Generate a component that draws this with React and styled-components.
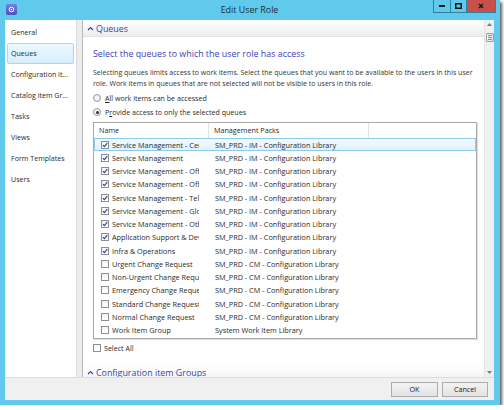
import React from "react";
import styled, { createGlobalStyle } from "styled-components";

const GlobalStyle = createGlobalStyle`
  html, body {
    margin: 0;
    padding: 0;
    background: #ffffff;
  }
  body {
    font-family: "Open Sans", "Noto Sans", sans-serif;
  }
`;

const Window = styled.div`
  width: 500px;
  height: 405px;
  box-sizing: border-box;
  background: #5fcaec;
  padding: 0 6px 5px 5px;
  display: flex;
  flex-direction: column;
  box-shadow: 2px 2px 3px rgba(0, 0, 0, 0.65);
`;

const TitleBar = styled.div`
  height: 20px;
  flex-shrink: 0;
  display: grid;
  grid-template-columns: 1fr auto 1fr;
  align-items: start;
`;

const AppIcon = styled.div`
  margin-top: 4px;
  margin-left: 1px;
  width: 11px;
  height: 11px;
  border-radius: 2px;
  background: linear-gradient(#7a7fe0, #4c4fb8);
  display: flex;
  align-items: center;
  justify-content: center;
`;

const Title = styled.div`
  font-size: 8.9px;
  line-height: 20px;
  color: #1c2a33;
`;

const Caption = styled.div`
  justify-self: end;
  margin-right: -2px;
  display: flex;
  height: 13px;
`;

const CaptionButton = styled.div`
  width: ${(p) => p.$w}px;
  height: 13px;
  box-sizing: border-box;
  border: 1px solid #2f7f9f;
  border-left-width: ${(p) => (p.$first ? 1 : 0)}px;
  border-top: none;
  background: ${(p) => (p.$close ? "#c8504a" : "#5fcaec")};
  display: flex;
  align-items: center;
  justify-content: center;
`;

const Frame = styled.div`
  flex: 1;
  min-height: 0;
  display: flex;
  flex-direction: column;
  background: #fff;
`;

const Upper = styled.div`
  flex: 1;
  min-height: 0;
  display: flex;
`;

const Nav = styled.div`
  width: 71px;
  flex-shrink: 0;
  padding-top: 2px;
  box-sizing: border-box;
  background: #fff;
`;

const NavItem = styled.div`
  height: 21px;
  margin: 0 2px;
  padding-left: 3px;
  box-sizing: border-box;
  font-size: 7.1px;
  line-height: 19px;
  color: #2a2a2a;
  white-space: nowrap;
  border: 1px solid ${(p) => (p.$active ? "#a8d8f2" : "transparent")};
  border-radius: 2px;
  background: ${(p) =>
    p.$active ? "linear-gradient(#eef8fe, #d6eefb)" : "transparent"};
`;

const Splitter = styled.div`
  width: 5px;
  flex-shrink: 0;
  background: #ececec;
  border-left: 1px solid #dadada;
  border-right: 1px solid #b9b9b9;
`;

const ContentArea = styled.div`
  flex: 1;
  min-width: 0;
  display: flex;
`;

const Scroller = styled.div`
  flex: 1;
  min-width: 0;
  overflow: hidden;
`;

const SectionHeader = styled.div`
  height: 17px;
  box-sizing: border-box;
  padding-left: 4px;
  display: flex;
  align-items: center;
  gap: 2px;
  background: linear-gradient(#ffffff, #ededed);
  border-bottom: 1px solid #e2e2e2;
  font-size: 8.9px;
  color: #3b3fb0;
`;

const Section = styled.div`
  padding: 10px 7px 0 10px;
`;

const Heading = styled.div`
  font-size: 8.9px;
  line-height: 14px;
  color: #3d3fb5;
`;

const Description = styled.div`
  margin-top: 6px;
  font-size: 7px;
  line-height: 11px;
  color: #333;
`;

const RadioRow = styled.label`
  display: flex;
  align-items: center;
  gap: 4px;
  height: 14px;
  font-size: 7.1px;
  color: #2a2a2a;
  margin-top: ${(p) => p.$mt || 0}px;
`;

const RadioCircle = styled.span`
  width: 8px;
  height: 8px;
  box-sizing: border-box;
  border-radius: 50%;
  border: 1px solid #9a9a9a;
  background: radial-gradient(#ffffff, #e6e6e6);
  display: flex;
  align-items: center;
  justify-content: center;
  &::after {
    content: "";
    width: 3px;
    height: 3px;
    border-radius: 50%;
    background: ${(p) => (p.$on ? "#333" : "transparent")};
  }
`;

const Table = styled.div`
  margin-top: 3px;
  border: 1px solid #a9a9a9;
  box-shadow: 1px 1px 1px rgba(0, 0, 0, 0.12);
  padding-bottom: 1px;
`;

const HeaderRow = styled.div`
  display: grid;
  grid-template-columns: 115px 160px 1fr;
  height: 15px;
`;

const HeaderCell = styled.div`
  font-size: 7.2px;
  line-height: 15px;
  padding-left: 5px;
  color: #2a2a2a;
  border-right: ${(p) => (p.$last ? "none" : "1px solid #e3e3e3")};
`;

const Row = styled.div`
  display: grid;
  grid-template-columns: 115px 160px 1fr;
  height: 13.25px;
  box-sizing: border-box;
  align-items: center;
  border: 1px solid ${(p) => (p.$selected ? "#8ccbee" : "transparent")};
  background: ${(p) =>
    p.$selected ? "linear-gradient(#f4fafe, #e1f1fc)" : "transparent"};
`;

const NameCell = styled.div`
  min-width: 0;
  display: flex;
  align-items: center;
  gap: 3px;
  padding-left: 6px;
  margin-right: 11px;
  overflow: hidden;
  white-space: nowrap;
  font-size: 7.3px;
  color: #2a2a2a;
`;

const PackCell = styled.div`
  min-width: 0;
  padding-left: 5px;
  white-space: nowrap;
  overflow: hidden;
  font-size: 7.3px;
  color: #2a2a2a;
`;

const Box = styled.span`
  width: 8px;
  height: 8px;
  flex-shrink: 0;
  box-sizing: border-box;
  border: 1px solid #8e8f8f;
  background: linear-gradient(#f4f4f4, #ffffff);
  display: flex;
  align-items: center;
  justify-content: center;
`;

const SelectAll = styled.label`
  display: flex;
  align-items: center;
  gap: 3px;
  height: 12px;
  margin-top: 3px;
  font-size: 7.1px;
  color: #2a2a2a;
`;

const NextHeader = styled(SectionHeader)`
  margin-top: 11px;
  background: linear-gradient(#ffffff, #f3f3f3);
`;

const ScrollBar = styled.div`
  width: 10px;
  flex-shrink: 0;
  background: #f0f0f0;
  border-left: 1px solid #e4e4e4;
  display: flex;
  flex-direction: column;
  align-items: center;
  box-sizing: border-box;
  padding: 3px 0;
`;

const Thumb = styled.div`
  margin-top: 7px;
  width: 8px;
  height: 9px;
  box-sizing: border-box;
  border: 1px solid #9c9c9c;
  border-radius: 1px;
  background: linear-gradient(90deg, #f6f6f6, #e4e4e4);
  display: flex;
  flex-direction: column;
  align-items: center;
  justify-content: center;
  gap: 1px;
`;

const Grip = styled.span`
  width: 4px;
  height: 1px;
  background: #8a8a8a;
`;

const Spacer = styled.div`
  flex: 1;
`;

const Footer = styled.div`
  height: 23px;
  flex-shrink: 0;
  box-sizing: border-box;
  background: #f0f0f0;
  border-top: 1px solid #dcdcdc;
  display: flex;
  justify-content: flex-end;
  align-items: flex-start;
  gap: 4px;
  padding: 4px 6px 0 0;
`;

const Button = styled.div`
  width: ${(p) => p.$w}px;
  height: 15px;
  box-sizing: border-box;
  border: 1px solid #acacac;
  background: linear-gradient(#f3f3f3, #e3e3e3);
  font-size: 7.2px;
  line-height: 13px;
  text-align: center;
  color: #222;
`;

const Check = () => (
  <svg width="6" height="6" viewBox="0 0 6 6">
    <path d="M0.8 3.1 L2.4 4.7 L5.3 1.2" fill="none" stroke="#2c4a9a" strokeWidth="1.2" />
  </svg>
);

const Chevron = () => (
  <svg width="7" height="5" viewBox="0 0 7 5">
    <path d="M1 4 L3.5 1.5 L6 4" fill="none" stroke="#3b3fb0" strokeWidth="1.2" />
  </svg>
);

const Arrow = ({ up }) => (
  <svg width="5" height="3" viewBox="0 0 5 3">
    <path d={up ? "M0 3 L2.5 0 L5 3 Z" : "M0 0 L2.5 3 L5 0 Z"} fill="#7a7a7a" />
  </svg>
);

const navItems = [
  "General",
  "Queues",
  "Configuration it...",
  "Catalog item Gr...",
  "Tasks",
  "Views",
  "Form Templates",
  "Users",
];

const IM = "SM_PRD - IM - Configuration Library";
const CM = "SM_PRD - CM - Configuration Library";

const queues = [
  { name: "Service Management - Central", pack: IM, on: true },
  { name: "Service Management", pack: IM, on: true },
  { name: "Service Management - Office", pack: IM, on: true },
  { name: "Service Management - Offsite", pack: IM, on: true },
  { name: "Service Management - Telephony", pack: IM, on: true },
  { name: "Service Management - Global", pack: IM, on: true },
  { name: "Service Management - Other", pack: IM, on: true },
  { name: "Application Support & Development", pack: IM, on: true },
  { name: "Infra & Operations", pack: IM, on: true },
  { name: "Urgent Change Request", pack: CM, on: false },
  { name: "Non-Urgent Change Request", pack: CM, on: false },
  { name: "Emergency Change Request", pack: CM, on: false },
  { name: "Standard Change Request", pack: CM, on: false },
  { name: "Normal Change Request", pack: CM, on: false },
  { name: "Work Item Group", pack: "System Work Item Library", on: false },
];

export default function App() {
  return (
    <>
      <GlobalStyle />
      <Window>
        <TitleBar>
          <AppIcon>
            <svg width="7" height="7" viewBox="0 0 7 7">
              <circle cx="3.5" cy="3.5" r="2.3" fill="none" stroke="#fff" strokeWidth="1" />
              <circle cx="3.5" cy="3.5" r="0.8" fill="#fff" />
            </svg>
          </AppIcon>
          <Title>Edit User Role</Title>
          <Caption>
            <CaptionButton $w={18} $first>
              <svg width="6" height="2" viewBox="0 0 6 2">
                <rect width="6" height="2" fill="#111" />
              </svg>
            </CaptionButton>
            <CaptionButton $w={16}>
              <svg width="7" height="6" viewBox="0 0 7 6">
                <rect x="0.75" y="0.75" width="5.5" height="4.5" fill="none" stroke="#111" strokeWidth="1.5" />
              </svg>
            </CaptionButton>
            <CaptionButton $w={29} $close>
              <svg width="6" height="6" viewBox="0 0 6 6">
                <path d="M1 1 L5 5 M5 1 L1 5" stroke="#1a1a1a" strokeWidth="1.5" />
              </svg>
            </CaptionButton>
          </Caption>
        </TitleBar>
        <Frame>
          <Upper>
            <Nav>
              {navItems.map((n) => (
                <NavItem key={n} $active={n === "Queues"}>
                  {n}
                </NavItem>
              ))}
            </Nav>
            <Splitter />
            <ContentArea>
              <Scroller>
                <SectionHeader>
                  <Chevron />
                  Queues
                </SectionHeader>
                <Section>
                  <Heading>Select the queues to which the user role has access</Heading>
                  <Description>
                    Selecting queues limits access to work items. Select the queues that you
                    want to be available to the users in this user role. Work items in queues
                    that are not selected will not be visible to users in this role.
                  </Description>
                  <RadioRow $mt={2}>
                    <RadioCircle />
                    <span>
                      <u>A</u>ll work items can be accessed
                    </span>
                  </RadioRow>
                  <RadioRow>
                    <RadioCircle $on />
                    <span>
                      P<u>r</u>ovide access to only the selected queues
                    </span>
                  </RadioRow>
                  <Table>
                    <HeaderRow>
                      <HeaderCell>Name</HeaderCell>
                      <HeaderCell>Management Packs</HeaderCell>
                      <HeaderCell $last />
                    </HeaderRow>
                    {queues.map((q, i) => (
                      <Row key={i} $selected={i === 0}>
                        <NameCell>
                          <Box>{q.on && <Check />}</Box>
                          {q.name}
                        </NameCell>
                        <PackCell>{q.pack}</PackCell>
                        <div />
                      </Row>
                    ))}
                  </Table>
                  <SelectAll>
                    <Box />
                    Select All
                  </SelectAll>
                </Section>
                <NextHeader>
                  <Chevron />
                  Configuration item Groups
                </NextHeader>
              </Scroller>
              <ScrollBar>
                <Arrow up />
                <Thumb>
                  <Grip />
                  <Grip />
                  <Grip />
                </Thumb>
                <Spacer />
                <Arrow />
              </ScrollBar>
            </ContentArea>
          </Upper>
          <Footer>
            <Button $w={47}>OK</Button>
            <Button $w={46}>Cancel</Button>
          </Footer>
        </Frame>
      </Window>
    </>
  );
}
